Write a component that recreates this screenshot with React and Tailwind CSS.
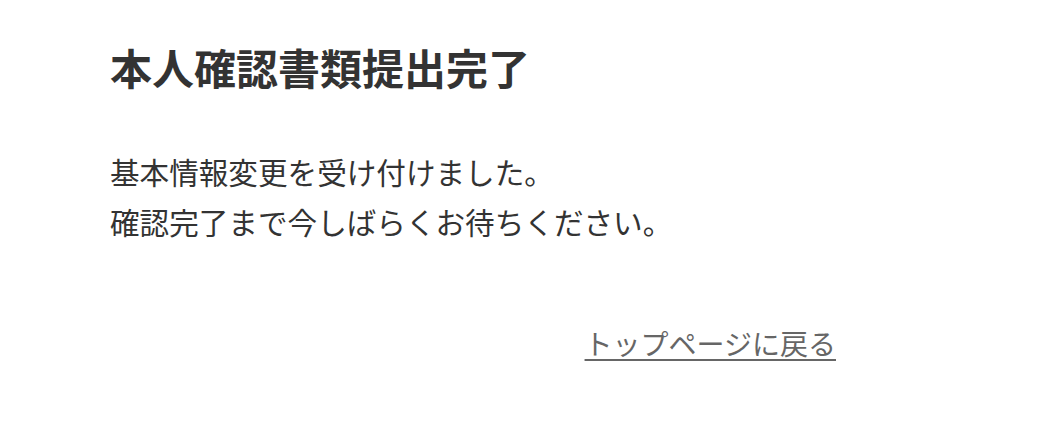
import React from "react";

export default function App() {
  return (
    <div
      className="min-h-[444px] w-full bg-white text-[#333]"
      style={{ fontFamily: '"Noto Sans CJK JP", "Noto Sans", sans-serif' }}
    >
      <div className="w-[726px] ml-[110px] pt-[37px]">
        <h1 className="text-[42px] font-bold leading-[60px]">本人確認書類提出完了</h1>
        <div className="mt-[50px] text-[29.6px] leading-[50px]">
          <p>基本情報変更を受け付けました。</p>
          <p>確認完了まで今しばらくお待ちください。</p>
        </div>
        <div className="mt-[76px] flex justify-end">
          <a href="#" className="text-[28px] leading-[40px] text-[#666] underline underline-offset-[4px] decoration-[2px]">
            トップページに戻る
          </a>
        </div>
      </div>
    </div>
  );
}
